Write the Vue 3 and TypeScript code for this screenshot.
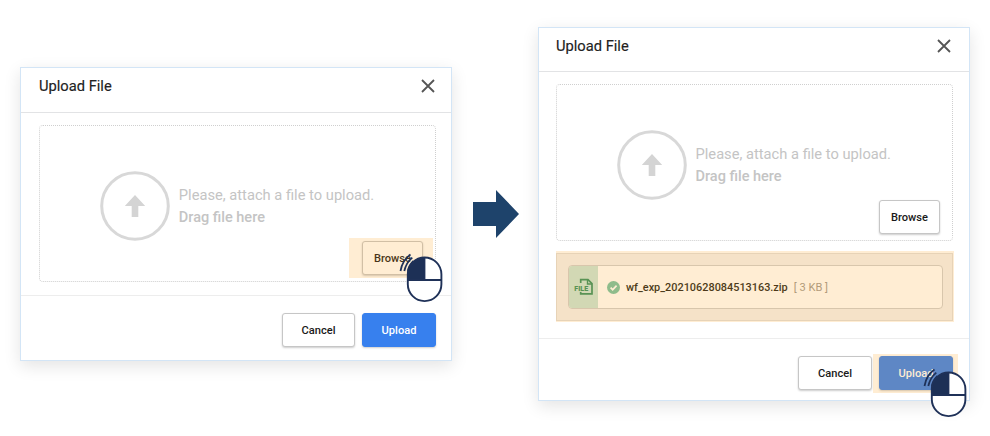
<script setup lang="ts">
interface AttachedFile {
  name: string
  size: string
}

interface Dialog {
  id: string
  file: AttachedFile | null
  target: 'browse' | 'upload'
}

const before: Dialog = { id: 'select', file: null, target: 'browse' }
const after: Dialog = {
  id: 'confirm',
  file: { name: 'wf_exp_20210628084513163.zip', size: '[ 3 KB ]' },
  target: 'upload',
}
const steps: Dialog[] = [before, after]
</script>

<template>
  <main class="stage">
    <template v-for="(step, index) in steps" :key="step.id">
      <svg v-if="index > 0" class="next" width="46" height="48" viewBox="0 0 46 48">
        <path d="M0 12H23V0L46 24L23 48V36H0Z" fill="#1e436b" />
      </svg>
      <section class="dialog" :class="step.id">
        <header class="head">
          <h2>Upload File</h2>
          <svg class="close" width="14" height="14" viewBox="0 0 14 14">
            <path d="M1 1L13 13M13 1L1 13" fill="none" stroke="#555" stroke-width="1.8" />
          </svg>
        </header>
        <div class="body">
          <div class="zone">
            <svg class="disc" width="70" height="70" viewBox="0 0 70 70">
              <circle cx="35" cy="35" r="33.3" fill="none" stroke="#d8d8d8" stroke-width="3" />
              <path d="M35 24L45.2 35H38.3V46H31.7V35H24.8Z" fill="#d4d4d4" />
            </svg>
            <div class="hint">
              <p>Please, attach a file to upload.</p>
              <p class="strong">Drag file here</p>
            </div>
            <button class="btn browse" type="button">Browse</button>
          </div>
          <div v-if="step.file" class="files">
            <div class="file">
              <div class="kind">
                <svg width="20" height="18" viewBox="0 0 20 18">
                  <path d="M6.7 5V1.7H14L18 5.6V15.9H6.7V13.6" fill="none" stroke="#318f62" stroke-width="1.7" />
                  <path d="M13.5 1.5V6H18" fill="none" stroke="#318f62" stroke-width="1.4" />
                  <text x="0.3" y="13">FILE</text>
                </svg>
              </div>
              <svg class="check" width="13" height="13" viewBox="0 0 13 13">
                <circle cx="6.5" cy="6.5" r="6.5" fill="#74c3a6" />
                <path d="M3.6 6.6L5.7 8.7L9.6 4.7" fill="none" stroke="#fff" stroke-width="1.7" />
              </svg>
              <span class="name">{{ step.file.name }}</span>
              <span class="size">{{ step.file.size }}</span>
            </div>
          </div>
        </div>
        <footer class="foot">
          <button class="btn cancel" type="button">Cancel</button>
          <button class="btn primary" type="button">Upload</button>
        </footer>
        <i class="mark" :class="step.target"></i>
        <i v-if="step.file" class="mark list"></i>
        <svg class="mouse" width="44" height="50" viewBox="0 0 44 50">
          <path d="M1.5 18Q3.5 7 11.5 1.6M5.3 18Q7.2 9.5 13.3 4.6M8.9 18Q10 12 14.5 8" fill="none" stroke="#1f3158" stroke-width="1.8" />
          <rect x="8.8" y="4.5" width="33.6" height="43.6" rx="16.8" fill="#fff" />
          <path d="M8.8 27V21.3A16.8 16.8 0 0 1 25.5 4.5V27Z" fill="#1d3056" />
          <path d="M25.5 4.5V27M8.8 27H42.2" stroke="#1f3158" stroke-width="1.8" />
          <rect x="8.8" y="4.5" width="33.6" height="43.6" rx="16.8" fill="none" stroke="#1f3158" stroke-width="1.9" />
        </svg>
      </section>
    </template>
  </main>
</template>

<style>
body {
  background: #fff;
}
</style>

<style scoped>
.stage {
  display: flex;
  align-items: flex-start;
  box-sizing: border-box;
  width: 990px;
  height: 436px;
  padding-left: 20px;
  font-family: Roboto, sans-serif;
  overflow: hidden;
}
.next {
  flex: none;
  margin: 190px 19px 0 21px;
}
.dialog {
  position: relative;
  box-sizing: border-box;
  display: flex;
  flex-direction: column;
  flex: none;
  width: 432px;
  border: 1px solid #d3e5f6;
  background: #fff;
  box-shadow: 0 5px 16px rgba(0, 0, 0, 0.11);
}
.select {
  height: 294px;
  margin-top: 67px;
}
.confirm {
  height: 374px;
  margin-top: 27px;
}
.head {
  box-sizing: border-box;
  display: flex;
  justify-content: space-between;
  height: 45px;
  padding: 8px 16px 0 18px;
  border-bottom: 1px solid #e2e3e5;
}
.confirm .head {
  height: 44px;
  padding-left: 17px;
  padding-right: 18px;
}
h2 {
  margin: 0;
  color: #222;
  font-size: 14.7px;
  font-weight: 400;
  line-height: 20px;
  -webkit-text-stroke: 0.15px #222;
}
.close {
  margin-top: 3px;
}
.body {
  flex: 1;
  padding: 12px 15px 0 18px;
}
.confirm .body {
  padding: 12px 16px 0 17px;
}
.zone {
  position: relative;
  box-sizing: border-box;
  display: flex;
  align-items: center;
  height: 157px;
  padding: 4px 0 0 60px;
  border: 1px dotted #cfcfcf;
  border-radius: 4px;
}
.hint {
  margin-left: 8.8px;
  color: #c4c4c4;
  font-size: 14.7px;
  line-height: 22px;
}
.confirm .hint {
  margin-left: 8.5px;
}
.hint p {
  margin: 0;
}
.hint .strong {
  padding-top: 1px;
  margin-bottom: -1px;
  font-size: 14.5px;
  font-weight: 500;
}
.btn {
  box-sizing: border-box;
  width: 74px;
  height: 34px;
  padding: 0;
  border: 1px solid #c6c6c6;
  border-radius: 3px;
  background: #fff;
  color: #1a1a1a;
  font: 500 11.1px Roboto, sans-serif;
  box-shadow: 0 1px 2px rgba(0, 0, 0, 0.2);
}
.select .cancel {
  width: 73px;
}
.primary {
  border-color: #3780ee;
  background: #3780ee;
  color: #fff;
}
.btn.browse {
  position: absolute;
  right: 12px;
  bottom: 6px;
  width: 61px;
}
.files {
  box-sizing: border-box;
  height: 68px;
  margin-top: 12px;
  padding: 11px 9px 0 11px;
  border: 1px solid #e2dfdc;
  background: #f3f2f2;
}
.file {
  box-sizing: border-box;
  display: flex;
  align-items: center;
  height: 44px;
  overflow: hidden;
  border: 1px solid #cfcfcf;
  border-radius: 4px;
  background: #fff;
}
.kind {
  display: flex;
  align-items: center;
  justify-content: center;
  width: 29px;
  height: 100%;
  background: #c7e5d9;
}
.kind text {
  fill: #318f62;
  stroke: #c7e5d9;
  stroke-width: 1.4px;
  paint-order: stroke;
  font: 900 7.1px Roboto, sans-serif;
}
.check {
  margin: 0 6px 0 9px;
}
.name {
  color: #221f1a;
  font-size: 10.9px;
  font-weight: 500;
}
.size {
  margin-left: 6px;
  color: #a09a91;
  font-size: 11.1px;
}
.foot {
  box-sizing: border-box;
  display: flex;
  justify-content: flex-end;
  gap: 7px;
  height: 65px;
  padding: 17px 15px 0 0;
  border-top: 1px solid #ededed;
}
.confirm .foot {
  height: 62px;
  padding: 17px 16px 0 0;
}
.mark {
  position: absolute;
  background: rgba(255, 163, 29, 0.195);
}
.mark.browse {
  left: 328px;
  top: 170px;
  width: 84px;
  height: 40px;
}
.mark.upload {
  left: 334px;
  top: 326px;
  width: 85px;
  height: 39px;
}
.mark.list {
  left: 17px;
  top: 223px;
  width: 398px;
  height: 71px;
}
.mouse {
  position: absolute;
  left: 378px;
  top: 185px;
}
.confirm .mouse {
  left: 384px;
  top: 340px;
}
</style>
